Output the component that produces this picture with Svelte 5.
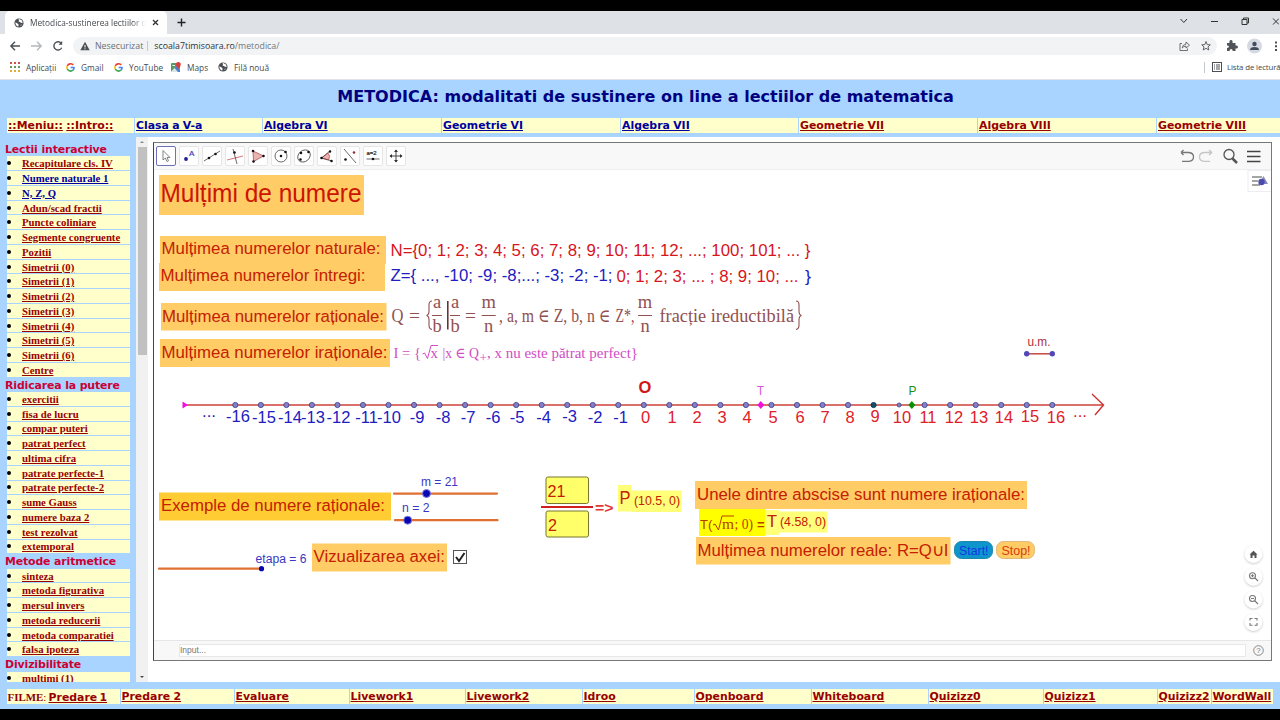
<script>
	const years = [
		{ text: 'Clasa a V-a', width: 128, fresh: true },
		{ text: 'Algebra VI', width: 179, fresh: true },
		{ text: 'Geometrie VI', width: 179, fresh: true },
		{ text: 'Algebra VII', width: 178, fresh: true },
		{ text: 'Geometrie VII', width: 179 },
		{ text: 'Algebra VIII', width: 179 },
		{ text: 'Geometrie VIII', width: 125 }
	];

	const films = [
		{ text: 'Predare 2', width: 114 },
		{ text: 'Evaluare', width: 115 },
		{ text: 'Livework1', width: 116 },
		{ text: 'Livework2', width: 117 },
		{ text: 'Idroo', width: 112 },
		{ text: 'Openboard', width: 117 },
		{ text: 'Whiteboard', width: 117 },
		{ text: 'Quizizz0', width: 115 },
		{ text: 'Quizizz1', width: 114 },
		{ text: 'Quizizz2', width: 54 },
		{ text: 'WordWall', width: 62 }
	];

	const menu = [
		{
			title: 'Lectii interactive',
			items: [
				'Recapitulare cls. IV', 'Numere naturale 1', 'N, Z, Q', 'Adun/scad fractii',
				'Puncte coliniare', 'Segmente congruente', 'Pozitii', 'Simetrii (0)', 'Simetrii (1)',
				'Simetrii (2)', 'Simetrii (3)', 'Simetrii (4)', 'Simetrii (5)', 'Simetrii (6)', 'Centre'
			]
		},
		{
			title: 'Ridicarea la putere',
			items: [
				'exercitii', 'fisa de lucru', 'compar puteri', 'patrat perfect', 'ultima cifra',
				'patrate perfecte-1', 'patrate perfecte-2', 'sume Gauss', 'numere baza 2',
				'test rezolvat', 'extemporal'
			]
		},
		{
			title: 'Metode aritmetice',
			items: ['sinteza', 'metoda figurativa', 'mersul invers', 'metoda reducerii', 'metoda comparatiei', 'falsa ipoteza']
		},
		{ title: 'Divizibilitate', items: ['multimi (1)'] }
	];
	const fresh = ['Numere naturale 1', 'N, Z, Q'];

	const bookmarks = [
		{ icon: 'apps', text: 'Aplicații', width: 56 },
		{ icon: 'google', text: 'Gmail', width: 48 },
		{ icon: 'google', text: 'YouTube', width: 57 },
		{ icon: 'maps', text: 'Maps', width: 47 },
		{ icon: 'globe', text: 'Filă nouă', width: 60 }
	];

	const tools = ['move', 'point', 'line', 'perp', 'poly', 'circle', 'conic', 'angle', 'mirror', 'slider', 'pan'];

	// Highlight boxes behind the captions
	const boxes = [
		{ x: 159, y: 175, w: 205, h: 40 },
		{ x: 160, y: 236, w: 226, h: 28 },
		{ x: 159, y: 263, w: 226, h: 28 },
		{ x: 161, y: 303, w: 225.5, h: 27.5 },
		{ x: 160, y: 339, w: 230, h: 28 },
		{ x: 159, y: 492.5, w: 232, h: 28, fill: '#ffcc33' },
		{ x: 312, y: 543.5, w: 135, h: 28 },
		{ x: 695, y: 481, w: 332, h: 28 },
		{ x: 696, y: 537, w: 254.5, h: 27.5 },
		{ x: 699, y: 509, w: 66.5, h: 27, fill: '#ffff00' },
		{ x: 765, y: 510, w: 14, h: 25, fill: '#ffff7a' },
		{ x: 779, y: 511.5, w: 48.5, h: 21, fill: '#ffff7a' },
		{ x: 618, y: 485, w: 13.5, h: 26.5, fill: '#ffff7a' },
		{ x: 631, y: 490.5, w: 50.5, h: 21.5, fill: '#ffff7a' }
	];

	const RED = '#c42000';
	const BLUE = '#2020c0';
	const labels = [
		{ x: 160.5, y: 201.5, w: 201, s: 25.5, c: '#cc1400', t: 'Mulțimi de numere' },
		{ x: 161.5, y: 254, w: 219, s: 16.8, t: 'Mulțimea numerelor naturale:' },
		{ x: 160.5, y: 281, w: 205, s: 16.8, t: 'Mulțimea numerelor întregi:' },
		{ x: 162, y: 321.5, w: 222, s: 16.8, t: 'Mulțimea numerelor raționale:' },
		{ x: 161.5, y: 358, w: 226, s: 16.8, t: 'Mulțimea numerelor iraționale:' },
		{ x: 390.5, y: 255.5, w: 420, s: 16.8, c: '#d8141c', t: 'N={0; 1; 2; 3; 4; 5; 6; 7; 8; 9; 10; 11; 12; ...; 100; 101; ... }' },
		{ x: 390.5, y: 281, w: 222, s: 16.8, c: BLUE, t: 'Z={ ..., -10; -9; -8;...; -3; -2; -1;' },
		{ x: 616.5, y: 281.5, w: 182, s: 16.8, c: '#d8141c', t: '0; 1; 2; 3; ... ; 8; 9; 10; ...' },
		{ x: 805, y: 281.5, w: 6, s: 16.8, c: BLUE, t: '}' },
		{ x: 161, y: 511, w: 224, s: 16.8, t: 'Exemple de numere raționale:' },
		{ x: 313.5, y: 562, w: 131.5, s: 16.8, t: 'Vizualizarea axei:' },
		{ x: 697, y: 499.5, w: 328, s: 16.8, t: 'Unele dintre abscise sunt numere iraționale:' },
		{ x: 697.5, y: 555.5, w: 251, s: 16.8, t: 'Mulțimea numerelor reale: R=Q∪I' },
		{ x: 421, y: 486, w: 37, s: 12.3, c: '#3838c4', t: 'm = 21' },
		{ x: 402, y: 512, w: 27.5, s: 12.3, c: '#3838c4', t: 'n = 2' },
		{ x: 255.5, y: 563, w: 51, s: 12.3, c: '#3838c4', t: 'etapa = 6' },
		{ x: 547.5, y: 496.5, w: 18, s: 16.5, t: '21' },
		{ x: 548, y: 530.5, w: 9, s: 16.5, t: '2' },
		{ x: 619.5, y: 503.5, w: 11, s: 17.5, t: 'P' },
		{ x: 634, y: 505, w: 46, s: 12.5, t: '(10.5, 0)' },
		{ x: 767, y: 526.5, w: 10, s: 16.5, t: 'T' },
		{ x: 780, y: 526, w: 46, s: 12.3, t: '(4.58, 0)' },
		{ x: 1027.5, y: 345.5, w: 23, s: 12.5, c: '#b03038', t: 'u.m.' },
		{ x: 757, y: 394.5, w: 7, s: 12, c: '#d850d8', t: 'T' },
		{ x: 908.5, y: 395, w: 8, s: 12.5, c: '#189018', t: 'P' },
		{ x: 202, y: 417, w: 14, s: 16, c: BLUE, t: '...' },
		{ x: 1073, y: 417, w: 14, s: 16, c: '#e02028', t: '...' },
		{ x: 959, y: 554.5, w: 29.5, s: 12.3, c: '#1238e0', t: 'Start!' },
		{ x: 1001.5, y: 554.5, w: 29, s: 12.3, c: '#d83c10', t: 'Stop!' }
	];

	const tickX = [
		238, 264, 290, 313, 338.5, 366.5, 389, 417, 443, 468, 493, 517, 543.5, 569.5, 595, 620.5,
		645.5, 672, 697, 722, 747, 773, 800, 825, 850, 875, 902, 928, 954, 979, 1004, 1030, 1056
	];
	const ticks = tickX.map((x, i) => {
		const n = i - 16;
		return { n, x, dot: 643.8 + 25.53 * n, y: [-16, -3, 9, 15].includes(n) ? 421.5 : 423 };
	});

	const fractions = [
		{ x: 437, top: 'a', bottom: 'b', r: 5 },
		{ x: 455, top: 'a', bottom: 'b', r: 5 },
		{ x: 488.7, top: 'm', bottom: 'n', r: 7 },
		{ x: 645, top: 'm', bottom: 'n', r: 7 }
	];
</script>

{#snippet globe()}
	<svg width="10" height="10" viewBox="0 0 10 10">
		<circle cx="5" cy="5" r="4.6" fill="#4b4f54" />
		<path d="M1.2 4.5Q3 5 3.8 5.7Q5 6 4.4 7.2Q4.6 8.4 4 8.8Q1.4 7.8 1.2 4.5ZM5 1.1Q4.2 2 5 2.7L4.5 3.6Q6 4 7 4.7L8.8 4.9Q8.6 2 5.8 1.2ZM6.4 7L7.7 6.4L7 8Z" fill="#fff" />
	</svg>
{/snippet}

<div class="screen">
	<div class="tabs">
		<div class="tab">
			{@render globe()}
			<span class="tab-title">Metodica-sustinerea lectiilor de matematica</span>
			<svg width="7" height="7" viewBox="0 0 7 7"><path d="M1 1L6 6M6 1L1 6" stroke="#333" stroke-width="1.3" /></svg>
		</div>
		<svg class="plus" width="9" height="9" viewBox="0 0 9 9"><path d="M4.5 .5V8.5M.5 4.5H8.5" stroke="#222" stroke-width="1.4" /></svg>
		<svg class="win" width="100" height="12" viewBox="0 0 100 12" fill="none" stroke="#333" stroke-width="1">
			<path d="M1.5 4L4.8 7.5L8 4M32 6.5H39M63 4.5H68V9.5H63ZM64.5 4.5V3H69.5V8H68M94 3.5L100 9.5M100 3.5L94 9.5" />
		</svg>
	</div>

	<div class="toolbar">
		<svg width="60" height="14" viewBox="0 0 60 14" fill="none" stroke-width="1.4">
			<path d="M11 7H2M6 2.8L1.9 7L6 11.2" stroke="#4b4f54" />
			<path d="M22 7H32M28 2.8L32.2 7L28 11.2" stroke="#b4b7bb" />
			<path d="M52.2 4.3A4.1 4.1 0 1 0 52.7 8.7" stroke="#4b4f54" />
			<path d="M53.2 2V5.7H49.5Z" fill="#4b4f54" stroke="none" />
		</svg>
		<div class="address">
			<svg width="10" height="10" viewBox="0 0 10 10"><path d="M5 .8L9.7 9.3H.3Z" fill="#4b4f54" /><path d="M5 4V6.5M5 7.3V8.3" stroke="#fff" /></svg>
			<span class="unsafe">Nesecurizat</span>
			<span class="host">scoala7timisoara.ro<span class="path">/metodica/</span></span>
			<svg class="share" width="32" height="12" viewBox="0 0 32 12" fill="none" stroke="#5f6368">
				<path d="M3 3.5H1V10.5H8.5V8.5M3.2 8Q3.5 4.3 7 4.2V2L10.5 5.2L7 8V6.2Q4.5 6 3.2 8Z" stroke-width=".9" />
				<path d="M27 1.5L28.2 4.6L31.3 4.8L29 6.9L29.8 10L27 8.3L24.2 10L25 6.9L22.7 4.8L25.8 4.6Z" />
			</svg>
		</div>
		<svg class="profile" width="54" height="18" viewBox="0 0 54 18">
			<path d="M1 6H3.5Q3 3 5 3Q7 3 6.5 6H9.5V8.5Q12 8 12 10Q12 12 9.5 11.5V14H6.8Q6.5 12 5 12Q3.7 12 3.5 14H1V11Q3 10.5 3 9.5Q3 8.5 1 8.5Z" fill="#505459" />
			<circle cx="28.5" cy="9" r="7.5" fill="#d5d9e2" />
			<circle cx="28.5" cy="7" r="2.2" fill="#424a5c" />
			<path d="M24 13Q24 10 28.5 10Q33 10 33 13Z" fill="#424a5c" />
			<path d="M50 4.5V6.5M50 8.2V10.2M50 12V14" stroke="#4b4f54" stroke-width="2" />
		</svg>
	</div>

	<div class="bookmarks">
		{#each bookmarks as b}
			<div class="bookmark" style="width: {b.width}px">
				{#if b.icon === 'apps'}
					<svg width="10" height="10" viewBox="0 0 10 10" fill="none" stroke-width="2" stroke-dasharray="2 2">
						<path d="M0 1H10" stroke="#cf5248" /><path d="M0 5H10" stroke="#5c9a60" /><path d="M0 9H10" stroke="#dcae3a" />
					</svg>
				{:else if b.icon === 'google'}
					<svg width="9" height="9" viewBox="0 0 9 9" fill="none" stroke-width="1.6">
						<path d="M7.3 2A3.6 3.6 0 0 0 1.3 3" stroke="#ea4335" />
						<path d="M1.3 3A3.6 3.6 0 0 0 1.3 6" stroke="#fbbc05" />
						<path d="M1.3 6A3.6 3.6 0 0 0 6.9 7.2" stroke="#34a853" />
						<path d="M6.9 7.2Q8.2 6 8 4.5H4.6" stroke="#4285f4" />
					</svg>
				{:else if b.icon === 'maps'}
					<svg width="10" height="10" viewBox="0 0 10 10">
						<rect y="1" width="9" height="9" rx="1" fill="#4f9d61" />
						<path d="M0 9.5L5.5 4L9 7.5V10H.5Z" fill="#dfe4e6" /><path d="M5.5 4L9 7.5V10H7L3.5 6Z" fill="#4a81d4" />
						<path d="M1.5 3.5H4" stroke="#fff" />
						<path d="M7.3 0A2.5 2.5 0 0 1 9.8 2.5Q9.8 4 7.3 7Q4.8 4 4.8 2.5A2.5 2.5 0 0 1 7.3 0Z" fill="#d84040" />
					</svg>
				{:else}
					{@render globe()}
				{/if}
				<span>{b.text}</span>
			</div>
		{/each}
		<div class="reading">
			<svg width="10" height="10" viewBox="0 0 10 10" fill="none" stroke="#4b4f54">
				<rect x=".5" y=".5" width="9" height="9" /><path d="M2 3H3M4 3H8M2 5H3M4 5H8M2 7H3M4 7H8" />
			</svg>
			<span>Lista de lectură</span>
		</div>
	</div>

	<header>
		<h1>METODICA: modalitati de sustinere on line a lectiilor de matematica</h1>
		<nav class="strip">
			<div class="cell" style="width: 128px"><a href="#meniu">::Meniu::</a> <a href="#intro">::Intro::</a></div>
			{#each years as y}
				<div class="cell" style="width: {y.width}px"><a href="#an" class:fresh={y.fresh}>{y.text}</a></div>
			{/each}
		</nav>
	</header>

	<main>
		<aside>
			{#each menu as group}
				<h2>{group.title}</h2>
				<ul>
					{#each group.items as item}
						<li><a href="#lectie" class:fresh={fresh.includes(item)}>{item}</a></li>
					{/each}
				</ul>
			{/each}
		</aside>
		<div class="scroll">
			<span class="up"></span>
			<span class="thumb"></span>
			<span class="down"></span>
		</div>

		<div class="content">
			<div class="applet">
				<div class="tools">
					{#each tools as tool}
						<div class="tool" class:active={tool === 'move'}>
							<svg width="18" height="18" viewBox="0 0 18 18" fill="none" stroke="#444" stroke-width=".8">
								{#if tool === 'move'}
									<path d="M6 3.5V13L8.3 11L10 14.5L11.5 13.8L10 10.5H13Z" fill="#fff" stroke="#666" />
								{:else if tool === 'point'}
									<circle cx="6" cy="12" r="1.9" fill="#1c1c9c" stroke="none" />
									<text x="9" y="9" font-size="8" fill="#3838b8" stroke="#3838b8" stroke-width=".2">A</text>
								{:else if tool === 'line'}
									<path d="M1 14L17 4" /><path d="M6 11h.01M12.5 7h.01" class="dots" />
								{:else if tool === 'perp'}
									<path d="M1 13L17 9" stroke="#d05050" /><path d="M7 2L11 17" /><path d="M8.5 5.5h.01" class="dots" />
								{:else if tool === 'poly'}
									<path d="M4 4L14.5 9L4.5 14.5Z" fill="#e8b4b4" stroke="#a85050" /><path d="M4 4h.01M14.5 9h.01M4.5 14.5h.01" class="dots" />
								{:else if tool === 'circle'}
									<circle cx="9" cy="9" r="6" /><path d="M9 9h.01M13.5 5h.01" class="dots" />
								{:else if tool === 'conic'}
									<ellipse cx="9" cy="9" rx="6.8" ry="5.5" transform="rotate(-40 9 9)" /><path d="M6 6h.01M13.5 5h.01M5.5 12.5h.01" class="dots" />
								{:else if tool === 'angle'}
									<path d="M3.5 11L10 6Q13 9 10.5 13Z" fill="#f0b0b0" stroke="#d05050" /><path d="M3.5 11L12 4M3.5 11L14 14" /><path d="M3.5 11h.01M12 4.5h.01M13.5 14h.01" class="dots" />
								{:else if tool === 'mirror'}
									<path d="M3 2L15 16" /><path d="M4.5 12.5h.01" class="dots" /><path d="M13 5.5h.01" class="dots red" />
								{:else if tool === 'slider'}
									<text x="2.5" y="7.5" font-size="6" fill="#222" stroke="#222" stroke-width=".2">a=2</text>
									<path d="M2.5 12H15.5" /><path d="M9 12h.01" class="dots" />
								{:else}
									<path d="M9 3V15M3 9H15" stroke-width="1" /><path d="M9 2.5L11 5H7ZM9 15.5L11 13H7ZM2.5 9L5 7V11ZM15.5 9L13 7V11Z" fill="#333" stroke="none" />
								{/if}
							</svg>
						</div>
					{/each}
					<svg class="actions" width="86" height="18" viewBox="0 0 86 18" fill="none" stroke="#777" stroke-width="1.3">
						<path d="M2 5.5H10Q14.5 6 14.5 10Q14.5 14 10 14.3H3M2 5.5L4.5 3M2 5.5L4.5 8" />
						<path d="M32 5.5H25Q20.5 6 20.5 10Q20.5 14 25 14.3H31M33 5.5L30 3M33 5.5L30 8" stroke="#c6c6c6" />
						<circle cx="50" cy="7.5" r="5" stroke="#555" /><path d="M53.5 11.5L58 16" stroke="#555" stroke-width="2.5" />
						<path d="M68 4.5H81.5M68 9.5H81.5M68 14.5H81.5" stroke="#444" stroke-width="1.6" />
					</svg>
				</div>

				<svg class="board" width="1117" height="470" viewBox="154 170 1117 470">
					{#each boxes as b}
						<rect x={b.x} y={b.y} width={b.w} height={b.h} fill={b.fill ?? '#ffcc66'} />
					{/each}

					<rect x="546" y="477" width="42.5" height="26.5" rx="2" fill="#ffff6a" stroke="#77772f" />
					<rect x="546" y="511" width="42.5" height="26" rx="2" fill="#ffff6a" stroke="#77772f" />
					<rect x="954.5" y="541.5" width="38" height="17" rx="7" fill="#0e96cc" stroke="#1f88a8" />
					<rect x="996.5" y="541.5" width="38" height="17" rx="7" fill="#ffcc66" stroke="#e0b878" />

					<!-- Number axis -->
					<path d="M184 405H1103" stroke="#cc4038" stroke-width="1.6" />
					<path d="M1092 394L1103.5 405L1095 415" fill="none" stroke="#d03030" stroke-width="1.4" />
					<path d="M182.5 401.5L188 405L182.5 408.5Z" fill="#f010e0" />
					{#each ticks as t}
						<circle cx={t.dot} cy="405" r={t.n === 10 ? 2 : 2.6} fill={t.n === 9 ? '#105068' : '#8080cc'} stroke={t.n === 9 ? '#103848' : '#4a4688'} stroke-width=".9" />
						<text x={t.x} y={t.y} font-size="16.5" text-anchor="middle" fill={t.n < 0 ? BLUE : '#e02028'}>{t.n}</text>
					{/each}
					<path d="M760.8 401L764.3 405L760.8 409L757.3 405Z" fill="#f010e0" />
					<path d="M911.8 401L915.3 405L911.8 409L908.3 405Z" fill="#089008" />
					<text x="645" y="393" font-size="16.5" font-weight="bold" text-anchor="middle" fill="#d01818">O</text>

					<path d="M1026.7 353.8H1052.3" stroke="#c44848" stroke-width="1.5" />
					<circle cx="1026.7" cy="353.8" r="2.7" fill="#5048b8" />
					<circle cx="1052.3" cy="353.8" r="2.7" fill="#5048b8" />

					<!-- Sliders -->
					<g stroke="#e07030" stroke-width="2.2" stroke-linecap="round">
						<path d="M394 493.6H497M395 520.2H497.5M159 568.7H261" />
					</g>
					<g fill="#0808b0" stroke="#8080e8" stroke-width="1">
						<circle cx="426.5" cy="493.5" r="4" />
						<circle cx="407.7" cy="520.2" r="4" />
						<circle cx="261.5" cy="568.7" r="2.6" stroke="none" />
					</g>
					<rect x="453.5" y="550.5" width="13" height="13" fill="#fff" stroke="#555" />
					<path d="M456 557L459 561L464.5 553" fill="none" stroke="#222" stroke-width="2" />

					<path d="M541 507H593" stroke="#d02020" stroke-width="1.8" />
					<text x="595" y="513" font-size="15.5" font-weight="bold" fill="#e03838" textLength="18.5" lengthAdjust="spacingAndGlyphs">=&gt;</text>

					{#each labels as l}
						<text x={l.x} y={l.y} font-size={l.s} fill={l.c ?? RED} textLength={l.w} lengthAdjust="spacingAndGlyphs">{l.t}</text>
					{/each}

					<!-- Q = { a/b | ... } -->
					<g class="math" fill="#905050" font-size="18.5">
						<text x="391.5" y="321.5" textLength="12" lengthAdjust="spacingAndGlyphs">Q</text>
						<text x="409" y="321.5" textLength="11" lengthAdjust="spacingAndGlyphs">=</text>
						<text x="465" y="321.5" textLength="11" lengthAdjust="spacingAndGlyphs">=</text>
						<text x="499" y="321.5" textLength="111.5" lengthAdjust="spacingAndGlyphs">, a, m ∈ Z, b, n ∈</text>
						<text x="615.5" y="321.5" textLength="19" lengthAdjust="spacingAndGlyphs">Z*,</text>
						<text x="659.5" y="321.5" textLength="134.5" lengthAdjust="spacingAndGlyphs">fracție ireductibilă</text>
						{#each fractions as f}
							<text x={f.x} y="307.5" text-anchor="middle">{f.top}</text>
							<text x={f.x} y="332" text-anchor="middle">{f.bottom}</text>
							<path d="M{f.x - f.r} 315.5H{f.x + f.r}" stroke="#905050" />
						{/each}
						<g fill="none" stroke="#905050" stroke-width="1.1">
							<path d="M432 301Q429 301 429 305V311Q429 315 426.5 315.5Q429 316 429 320V325Q429 329 432 329.5" />
							<path d="M796 301Q799 301 799 305V311Q799 315 801.5 315.5Q799 316 799 320V325Q799 329 796 329.5" />
							<path d="M447.8 301V329.5" stroke="#602828" stroke-width="1.5" />
						</g>
					</g>
					<g class="math" fill="#d24cc4" font-size="14.8">
						<text x="393.5" y="357.5">I</text>
						<text x="402" y="357.5" textLength="19" lengthAdjust="spacingAndGlyphs">= {'{'}</text>
						<text x="430.5" y="357.5">x</text>
						<path d="M422.5 354L424.5 353L427.5 358.5L431 345.5H438" fill="none" stroke="#d24cc4" />
						<text x="442.5" y="357.5" textLength="36.5" lengthAdjust="spacingAndGlyphs">|x ∈ Q</text>
						<text x="479.5" y="361.5" font-size="13">+</text>
						<text x="487" y="357.5" textLength="151" lengthAdjust="spacingAndGlyphs">, x nu este pătrat perfect{'}'}</text>
					</g>
					<g fill="#b83c00" font-size="15.5">
						<text x="700" y="529" font-size="13">T(</text>
						<path d="M713 525L715 524L718.5 530L722 516H734" fill="none" stroke="#b83c00" />
						<text class="math" x="722" y="529" textLength="12" lengthAdjust="spacingAndGlyphs">m</text>
						<text class="math" x="734.5" y="529" textLength="18.5" lengthAdjust="spacingAndGlyphs">; 0)</text>
						<text x="757" y="529" font-size="13" font-weight="bold">=</text>
					</g>

					<!-- View buttons -->
					<rect x="1248" y="170.5" width="26" height="21" fill="#fff" stroke="#ececf2" />
					<path d="M1252 177H1262M1252 181H1258M1252 185H1260" stroke="#888" stroke-width="1.3" />
					<path d="M1263.5 176L1268 184H1259Z" fill="#8888b8" /><circle cx="1261.5" cy="182" r="3.2" fill="#4c4cac" />
					<g class="round">
						<circle cx="1253.5" cy="554" r="9" /><circle cx="1253.5" cy="576.7" r="9" /><circle cx="1253.5" cy="599.5" r="9" /><circle cx="1253.5" cy="622" r="9" />
					</g>
					<path d="M1249.5 554.5L1253.5 550.7L1257.5 554.5H1256.5V558H1254.5V555.5H1252.5V558H1250.5V554.5Z" fill="#555" />
					<g fill="none" stroke="#777" stroke-width="1.1">
						<circle cx="1252.5" cy="575.7" r="3" /><path d="M1255 578L1258 581M1251 575.7H1254M1252.5 574.2V577.2" />
						<circle cx="1252.5" cy="598.5" r="3" /><path d="M1255 601L1258 604M1251 598.5H1254" />
						<path d="M1250 620.5V618.5H1252.5M1254.5 618.5H1257V620.5M1257 623V625.3H1254.5M1252.5 625.3H1250V623" />
					</g>
				</svg>

				<div class="input-bar">
					<div class="input">Input...</div>
					<svg width="11" height="11" viewBox="0 0 11 11"><circle cx="5.5" cy="5.5" r="4.8" fill="none" stroke="#888" /><text x="5.5" y="8.3" font-size="8" text-anchor="middle" fill="#777">?</text></svg>
				</div>
			</div>
		</div>
	</main>

	<footer>
		<div class="strip">
			<div class="cell films" style="width: 114px"><b>FILME</b><i>:</i> <a href="#film">Predare 1</a></div>
			{#each films as f}
				<div class="cell" style="width: {f.width}px"><a href="#film">{f.text}</a></div>
			{/each}
		</div>
	</footer>
</div>

<style>
	:global(body) {
		margin: 0;
		background: #000;
	}

	.screen {
		box-sizing: border-box;
		width: 1280px;
		height: 720px;
		padding: 11px 0;
		display: flex;
		flex-direction: column;
		overflow: hidden;
		background: #000;
		font-family: 'Liberation Sans', Arial, sans-serif;
		white-space: nowrap;
	}

	svg {
		display: block;
		flex: none;
	}

	/* Browser */
	.tabs {
		flex: none;
		height: 23px;
		display: flex;
		align-items: center;
		background: #dee1e6;
	}

	.tab {
		align-self: stretch;
		box-sizing: border-box;
		width: 162px;
		margin-left: 5px;
		padding: 0 8px 0 9px;
		display: flex;
		align-items: center;
		gap: 6px;
		background: #fff;
		border-radius: 5px 5px 0 0;
	}

	.tab-title {
		width: 117px;
		overflow: hidden;
		font-family: 'Open Sans', sans-serif;
		font-size: 8.3px;
		color: #45494d;
		mask-image: linear-gradient(90deg, #000 88%, transparent);
	}

	.plus {
		margin-left: 10px;
	}

	.win {
		margin: 0 1px 4px auto;
	}

	.toolbar {
		flex: none;
		height: 24px;
		padding-left: 9px;
		display: flex;
		align-items: center;
		background: #fff;
	}

	.address {
		height: 18px;
		width: 1145px;
		margin-left: 4px;
		padding-left: 7px;
		box-sizing: border-box;
		display: flex;
		align-items: center;
		border-radius: 9px;
		background: #f1f3f4;
		font-family: 'Open Sans', sans-serif;
		font-size: 8.8px;
		color: #303438;
	}

	.unsafe {
		margin-left: 5px;
		padding-right: 4px;
		border-right: 1px solid #c5c8cc;
		line-height: 10px;
		color: #6c7074;
	}

	.host {
		margin-left: 6px;
	}

	.path {
		color: #75797d;
	}

	.share {
		margin-left: auto;
		margin-right: 6px;
	}

	.profile {
		margin-left: 9px;
	}

	.bookmarks {
		flex: none;
		box-sizing: border-box;
		height: 22px;
		padding: 0 0 3px 10px;
		display: flex;
		align-items: center;
		background: #fff;
		border-bottom: 1px solid #e0e4e8;
		font-family: 'Open Sans', sans-serif;
		font-size: 8.3px;
		color: #45494d;
	}

	.bookmark {
		display: flex;
		align-items: center;
		gap: 6px;
	}

	.reading {
		box-sizing: border-box;
		width: 76px;
		margin-left: auto;
		padding-left: 7px;
		display: flex;
		align-items: center;
		gap: 5px;
		border-left: 1px solid #c5c8cc;
		line-height: 11px;
		font-size: 7.9px;
		letter-spacing: -0.15px;
	}

	/* Page */
	header {
		flex: none;
		height: 57px;
		background: #a8d4ff;
	}

	h1 {
		margin: 0;
		height: 38px;
		line-height: 33px;
		padding-left: 11px;
		text-align: center;
		font-family: 'DejaVu Sans', Verdana, sans-serif;
		font-size: 16.05px;
		color: #000080;
	}

	.strip {
		margin-left: 7px;
		display: flex;
		height: 15px;
		font-family: 'DejaVu Sans', Verdana, sans-serif;
		font-size: 10.9px;
		font-weight: bold;
		line-height: 15px;
	}

	.cell {
		box-sizing: border-box;
		flex: none;
		padding-left: 1px;
		background: #ffffcc;
		border-right: 1px solid #a8d4ff;
		word-spacing: -0.5px;
	}

	a {
		color: #990000;
		text-decoration: underline;
	}

	a.fresh {
		color: #0000a0;
	}

	main {
		flex: 1;
		min-height: 0;
		display: flex;
		background: #fff;
	}

	aside {
		box-sizing: border-box;
		flex: none;
		width: 136px;
		padding: 5px 6px 0 5px;
		background: #a8d4ff;
		overflow: hidden;
	}

	h2 {
		margin: 0;
		height: 14.4px;
		line-height: 15px;
		font-family: 'DejaVu Sans', Verdana, sans-serif;
		font-size: 10.9px;
		letter-spacing: -0.12px;
		color: #cc0033;
	}

	ul {
		margin: 0 0 0 2px;
		padding: 0;
		list-style: none;
	}

	li {
		box-sizing: border-box;
		height: 14.75px;
		display: flex;
		align-items: center;
		background: #ffffcc;
		border-bottom: 1px solid #a8d4ff;
		font-family: 'Liberation Serif', 'Times New Roman', serif;
		font-size: 10.75px;
		font-weight: bold;
	}

	li::before {
		content: '';
		width: 4px;
		height: 4px;
		margin-right: 11px;
		border-radius: 50%;
		background: #000;
	}

	.scroll {
		flex: none;
		width: 12px;
		display: flex;
		flex-direction: column;
		align-items: center;
		background: #f1f1f1;
	}

	.up,
	.down {
		border: 2.5px solid transparent;
	}

	.up {
		margin-top: 2px;
		border-bottom-color: #888;
	}

	.thumb {
		width: 9px;
		height: 208px;
		margin-top: 4px;
		background: #c1c1c1;
	}

	.down {
		margin: auto 0 2px;
		border-top-color: #444;
	}

	.content {
		padding: 5px 0 0 5px;
	}

	.applet {
		width: 1117px;
		height: 517px;
		border: 1px solid #777;
		border-left-color: #444;
	}

	.tools {
		box-sizing: border-box;
		height: 27px;
		padding-left: 2px;
		display: flex;
		align-items: center;
		gap: 3px;
		background: #f8f8f8;
		border-bottom: 1px solid #eee;
	}

	.tool {
		box-sizing: border-box;
		width: 20px;
		height: 20px;
		border: 1px solid #e6e6e6;
		border-radius: 2px;
		background: #fff;
	}

	.tool.active {
		border-color: #7070b8;
	}

	.dots {
		stroke: #111;
		stroke-width: 2.6;
		stroke-linecap: round;
	}

	.dots.red {
		stroke: #903030;
	}

	.actions {
		margin-left: auto;
		margin-right: 6px;
	}

	.board {
		background: #fff;
	}

	.math {
		font-family: 'Liberation Serif', 'DejaVu Serif', serif;
	}

	.round {
		fill: #fff;
		filter: drop-shadow(0 1px 1px rgba(0, 0, 0, 0.2));
	}

	.input-bar {
		box-sizing: border-box;
		height: 20px;
		padding-left: 25px;
		display: flex;
		align-items: center;
		gap: 7px;
		background: #f8f8f8;
		border-top: 1px solid #e6e6e6;
	}

	.input {
		box-sizing: border-box;
		width: 1067px;
		height: 13px;
		border: 1px solid #e8e8e8;
		background: #fff;
		font-size: 8.5px;
		line-height: 11px;
		color: #777;
	}

	footer {
		flex: none;
		box-sizing: border-box;
		height: 27px;
		padding-top: 7px;
		background: #a8d4ff;
	}

	footer .cell {
		padding-left: 0.5px;
		line-height: 16px;
		color: #900000;
	}

	.cell.films {
		word-spacing: -1.5px;
	}

	b,
	i {
		font-family: 'Liberation Serif', serif;
		font-style: normal;
	}

	i {
		font-weight: normal;
	}
</style>
